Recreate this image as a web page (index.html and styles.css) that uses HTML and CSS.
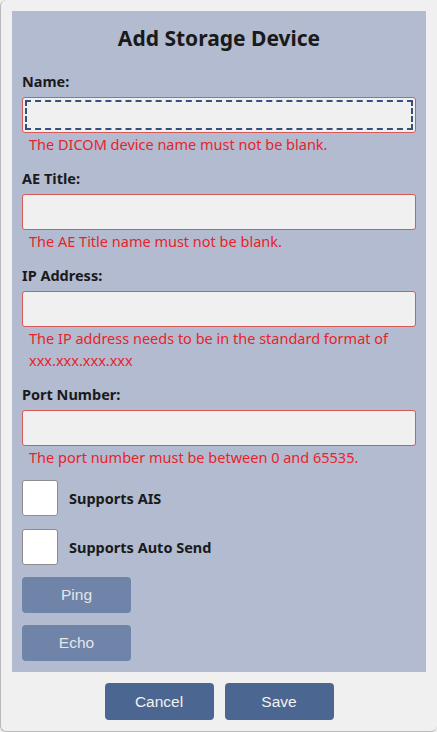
FILE: index.html
```html
<!DOCTYPE html>
<html lang="en">
<head>
    <meta charset="UTF-8">
    <title>Add Storage Device</title>
    <link rel="stylesheet" href="styles.css">
</head>
<body>

<div class="dialog">
    <div class="panel">
        <h1 class="title">Add Storage Device</h1>

        <div class="field">
            <label for="name">Name:</label>
            <input id="name" type="text" class="focused">
            <div class="error">The DICOM device name must not be blank.</div>
        </div>

        <div class="field">
            <label for="ae">AE Title:</label>
            <input id="ae" type="text">
            <div class="error">The AE Title name must not be blank.</div>
        </div>

        <div class="field">
            <label for="ip">IP Address:</label>
            <input id="ip" type="text">
            <div class="error">The IP address needs to be in the standard format of xxx.xxx.xxx.xxx</div>
        </div>

        <div class="field">
            <label for="port">Port Number:</label>
            <input id="port" type="text">
            <div class="error">The port number must be between 0 and 65535.</div>
        </div>

        <div class="check first">
            <span class="box"></span>
            <span class="check-label">Supports AIS</span>
        </div>
        <div class="check">
            <span class="box"></span>
            <span class="check-label">Supports Auto Send</span>
        </div>

        <button class="tool">Ping</button>
        <button class="tool">Echo</button>
    </div>

    <div class="footer">
        <button class="action">Cancel</button>
        <button class="action">Save</button>
    </div>
</div>

</body>
</html>
```

FILE: styles.css
```css
*{
    margin: 0;
    padding: 0;
    box-sizing: border-box;
}
html, body{
    height: 100%;
}
body{
    background-color: #f0f0f0;
    font-family: "Noto Sans", "Open Sans", sans-serif;
    color: #1a1a1a;
}
.dialog{
    height: 732px;
    padding: 11px 11px 0 11px;
    border-left: 1px solid #b9b9b9;
    border-bottom: 1px solid #b9b9b9;
    border-radius: 6px;
    background-color: #f0f0f0;
}
.panel{
    background-color: #b2bbcf;
    padding: 12px 10px 11px 10px;
}
.title{
    font-size: 21px;
    line-height: 30px;
    text-align: center;
    font-weight: bold;
    margin-bottom: 17px;
}
.field + .field{
    margin-top: 12px;
}
label, .check-label{
    display: block;
    font-size: 14.5px;
    font-weight: bold;
    line-height: 22px;
}
label{
    margin-bottom: 5px;
}
input{
    display: block;
    width: 100%;
    height: 36px;
    border: 1px solid #d65a57;
    border-radius: 3px;
    background-color: #f0f0f0;
    outline: none;
}
input.focused{
    outline: 2px dashed #34507e;
    outline-offset: -5px;
}
.error{
    color: #e8232c;
    font-size: 14.5px;
    line-height: 22px;
    padding-left: 7px;
}
.check{
    display: flex;
    align-items: center;
    gap: 11px;
    margin-top: 13px;
}
.check.first{
    margin-top: 12px;
}
.box{
    width: 36px;
    height: 36px;
    background-color: #fff;
    border: 1px solid #8c8c8c;
    border-radius: 3px;
}
button{
    font-family: "Liberation Sans", Arial, sans-serif;
    border: none;
    border-radius: 4px;
    cursor: pointer;
}
.tool{
    display: block;
    width: 109px;
    height: 36px;
    margin-top: 12px;
    background-color: #6f84a8;
    color: #e4e6ea;
    font-size: 15.5px;
}
.tool + .tool{
    margin-top: 12px;
}
.footer{
    display: flex;
    justify-content: center;
    gap: 11px;
    padding-top: 11px;
}
.action{
    width: 109px;
    height: 37px;
    background-color: #4b6691;
    color: #f2f2f2;
    font-size: 15.5px;
}
```
